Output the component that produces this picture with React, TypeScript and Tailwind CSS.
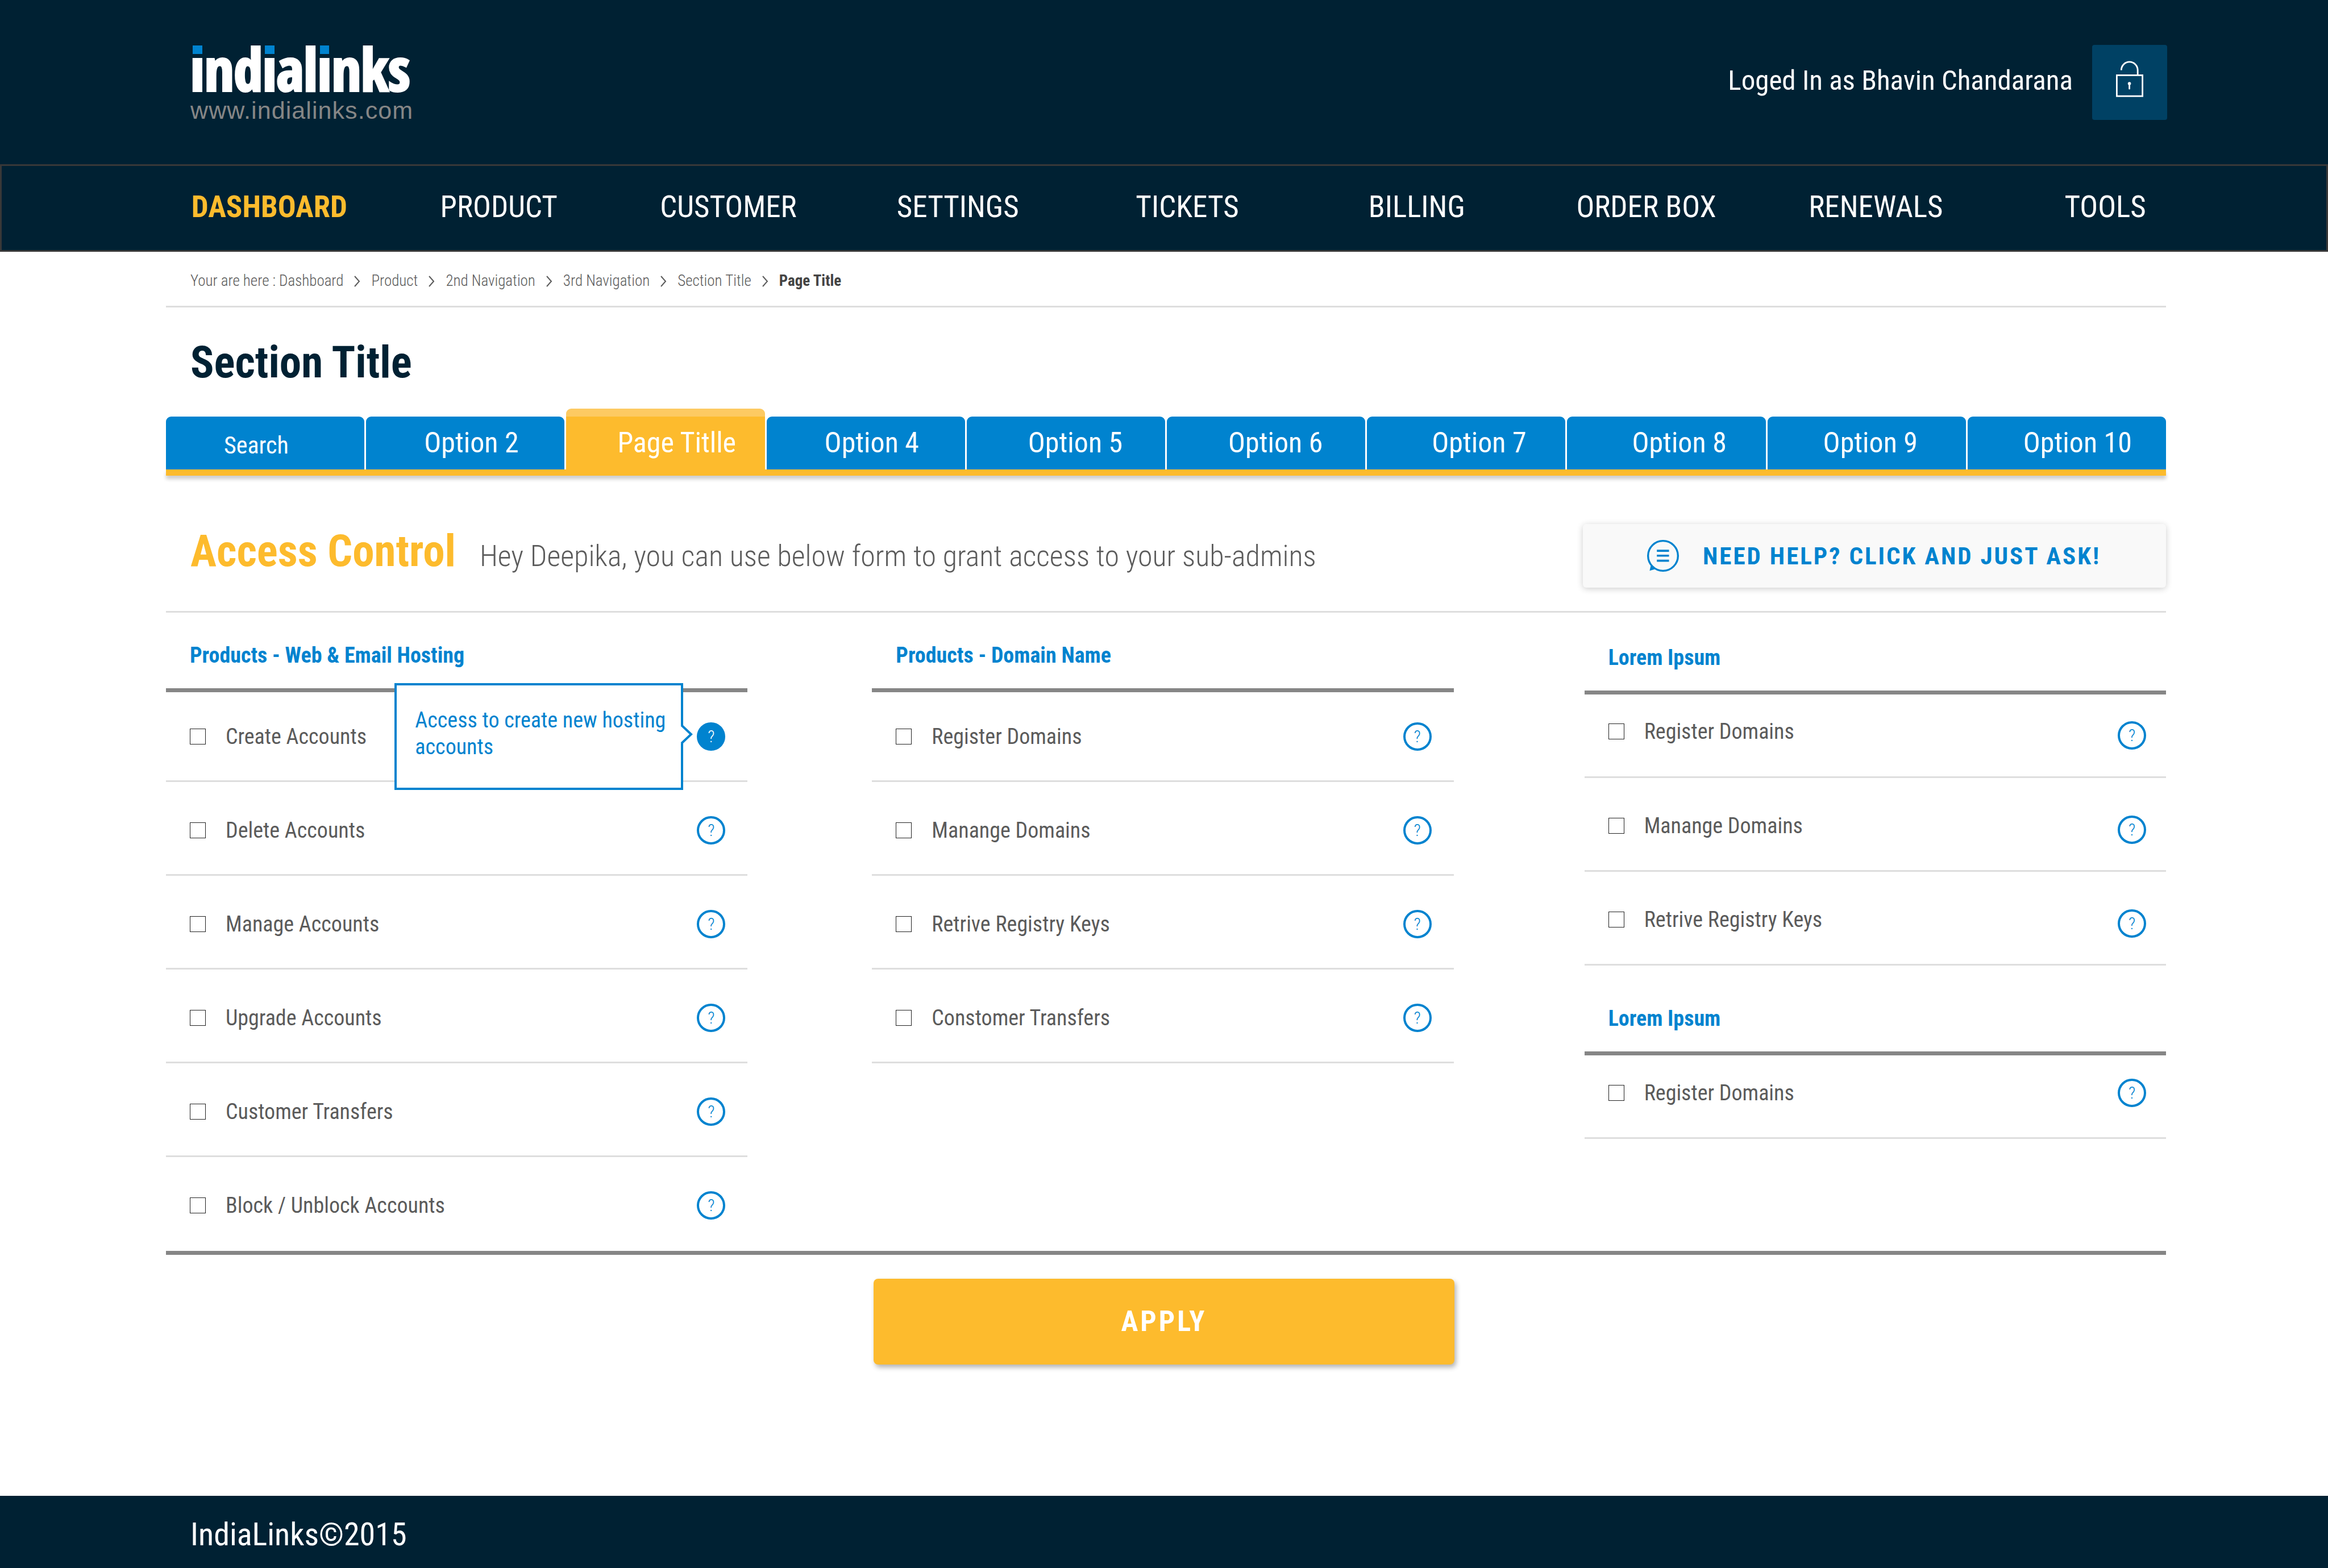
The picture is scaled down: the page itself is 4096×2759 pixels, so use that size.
import { Fragment } from "react";
import clsx from "clsx";

const NAV = ["DASHBOARD", "PRODUCT", "CUSTOMER", "SETTINGS", "TICKETS", "BILLING", "ORDER BOX", "RENEWALS", "TOOLS"];
const CRUMBS = ["Your are here : Dashboard", "Product", "2nd Navigation", "3rd Navigation", "Section Title"];

const TABS = [
  { label: "Search", pad: "pl-[102px] pt-2 text-[42px]" },
  { label: "Option 2", pad: "pl-[102px] text-[50px]" },
  { label: "Page Titlle", pad: "pl-[90px] text-[50px]", active: true },
  { label: "Option 4", pad: "pl-[102px] text-[50px]" },
  { label: "Option 5", pad: "pl-[108px] text-[50px]" },
  { label: "Option 6", pad: "pl-[108px] text-[50px]" },
  { label: "Option 7", pad: "pl-[114px] text-[50px]" },
  { label: "Option 8", pad: "pl-[114px] text-[50px]" },
  { label: "Option 9", pad: "pl-[98px] text-[50px]" },
  { label: "Option 10", pad: "pl-[98px] text-[50px]" },
];

function LogoI() {
  return (
    <span className="relative bg-[linear-gradient(transparent_49px,#fff_49px)] bg-clip-text text-transparent">
      i<span className="absolute top-[29px] right-[4px] left-[4px] h-[15px] bg-[#0083cf]" />
    </span>
  );
}

function Logo() {
  return (
    <a href="#home" className="block">
      <span className="block h-[98px] font-['Open_Sans_Condensed','Roboto_Condensed',sans-serif] text-[102px] leading-[84px] font-bold whitespace-nowrap text-white [-webkit-text-stroke:4px_#fff]">
        <span className="[&>span]:[-webkit-text-stroke:4px_transparent]">
          <LogoI />nd<LogoI />al<LogoI />nks
        </span>
      </span>
      <span className="block font-['Liberation_Sans',sans-serif] text-[43px] leading-[34px] tracking-wide text-[#868686]">
        www.indialinks.com
      </span>
    </a>
  );
}

function LockIcon() {
  return (
    <svg viewBox="0 0 171 227" className="h-[64px] w-[48px]" fill="none" stroke="#fff" strokeWidth="10">
      <path d="M33 58 A51.500 51.500 0 0 1 136 58 V88" />
      <rect x="5" y="90" width="161" height="131" />
      <circle cx="84" cy="142" r="10" fill="#fff" stroke="none" />
      <path d="M84 142 V174" strokeLinecap="round" />
    </svg>
  );
}

function ChatIcon() {
  return (
    <svg viewBox="0 0 202 202" className="size-[56px] shrink-0" fill="none" stroke="#0083cf">
      <circle cx="101" cy="101" r="95" strokeWidth="12" />
      <path d="M62 69 H139 M62 100 H139 M62 132 H139" strokeWidth="13" />
      <path d="M24 160 L16 196 L50 186 Z" fill="#0083cf" stroke="none" />
    </svg>
  );
}

function Chevron() {
  return (
    <svg viewBox="0 0 13 20" className="mx-[18px] h-[20px] w-[13px]" fill="none" stroke="#5b5b5b" strokeWidth="2">
      <path d="M2 1 L10 10 L2 19" />
    </svg>
  );
}

function Heading({ children, height }: { children: string; height: string }) {
  return (
    <h3
      className={clsx(
        "flex items-end border-b-[7px] border-[#868686] pb-[34px] pl-[42px] text-[38px] leading-[48px] font-bold text-[#0083cf]",
        height,
      )}
    >
      {children}
    </h3>
  );
}

function Row({ id, label, size, raised, tip, last }: {
  id: string;
  label: string;
  size: string;
  raised?: boolean;
  tip?: string;
  last?: boolean;
}) {
  return (
    <li className={clsx("flex items-center border-b-[3px] pl-[42px]", last ? "border-transparent" : "border-[#dedede]", size)}>
      <div className={clsx("flex items-center gap-[35px]", raised && "pb-[14px]")}>
        <input id={id} type="checkbox" className="size-[28px] appearance-none border border-[#222] bg-white checked:bg-[#0083cf]" />
        <label htmlFor={id} className="text-[38px] leading-[48px] text-[#5b5b5b]">{label}</label>
      </div>
      <div className="relative ml-auto">
        <button
          type="button"
          aria-label={`Help: ${label}`}
          className={clsx(
            "flex size-[50px] items-center justify-center rounded-full border-[4px] border-[#0083cf] text-[30px] leading-none font-light",
            tip ? "bg-[#0083cf] text-white" : "text-[#0083cf]",
          )}
        >
          ?
        </button>
        {tip && (
          <div role="tooltip" className="absolute -top-[69px] right-[74px] h-[188px] w-[508px] border-[4px] border-[#0083cf] bg-white pt-[38px] pl-[32px] text-[38px] leading-[47px] text-[#0083cf]">
            {tip}
            <svg viewBox="0 0 24 36" className="absolute top-[68px] -right-[22px] h-[36px] w-[24px]" fill="#fff" stroke="#0083cf" strokeWidth="4">
              <path d="M0 2 H2 L20 18 L2 34 H0" stroke="none" />
              <path d="M3 2 L20 18 L3 34" />
            </svg>
          </div>
        )}
      </div>
    </li>
  );
}

function Rows({ group, items, first = "h-[158px] pr-[39px]", next = "h-[165px] pt-[8px] pr-[39px]", raised, tips, openEnd }: {
  group: string;
  items: string[];
  first?: string;
  next?: string;
  raised?: boolean;
  tips?: Record<string, string>;
  openEnd?: boolean;
}) {
  return (
    <ul>
      {items.map((label, i) => (
        <Row
          key={label}
          id={`${group}-${i}`}
          label={label}
          raised={raised}
          tip={tips?.[label]}
          size={i === 0 ? first : next}
          last={openEnd && i === items.length - 1}
        />
      ))}
    </ul>
  );
}

export default function App() {
  return (
    <div className="flex min-h-screen flex-col bg-white font-['Roboto_Condensed','Roboto',sans-serif]">
      <header className="bg-[#002133] text-white">
        <div className="flex items-center justify-between pt-[79px] pr-[283px] pb-[78px] pl-[335px]">
          <Logo />
          <div className="flex items-center gap-[34px]">
            <span className="pb-[6px] text-[49px] leading-[60px]">Loged In as Bhavin Chandarana</span>
            <button type="button" aria-label="Log out" className="flex size-[132px] items-center justify-center rounded-[4px] bg-[#004164] pb-[12px]">
              <LockIcon />
            </button>
          </div>
        </div>
        <nav className="grid grid-cols-9 border-[3px] border-[#383838] pr-[187px] pl-[269px]">
          {NAV.map((item, i) => (
            <a
              key={item}
              href={`#${item.toLowerCase().replace(" ", "-")}`}
              className={clsx("pb-[4px] text-center text-[53px] leading-[144px] whitespace-nowrap", i === 0 && "font-bold text-[#fdbb2d]")}
            >
              {item}
            </a>
          ))}
        </nav>
      </header>

      <main className="pr-[285px] pl-[292px]">
        <nav aria-label="Breadcrumb" className="flex h-[98px] items-center border-b-[3px] border-[#dedede] pt-[8px] pl-[43px] text-[27px] font-light text-[#5b5b5b]">
          {CRUMBS.map((crumb) => (
            <Fragment key={crumb}>
              <a href="#crumb">{crumb}</a>
              <Chevron />
            </Fragment>
          ))}
          <span className="font-bold text-[#444]">Page Title</span>
        </nav>

        <h1 className="flex h-[178px] items-center pt-[16px] pl-[43px] text-[77px] leading-[90px] font-bold text-[#002133]">Section Title</h1>

        <div className="grid grid-cols-10 items-end gap-x-[3px] text-white">
          {TABS.map((tab) => (
            <button
              key={tab.label}
              type="button"
              className={clsx(
                "flex items-center rounded-t-[9px] whitespace-nowrap",
                tab.active
                  ? "h-[107px] bg-[linear-gradient(#fdca62_14px,#fdbb2d_14px)] pt-[14px]"
                  : "h-[93px] bg-[#0083cf]",
                tab.pad,
              )}
            >
              {tab.label}
            </button>
          ))}
        </div>
        <div className="h-[11px] bg-[#fdbb2d] shadow-[0_6px_6px_rgba(0,0,0,0.2)]" />

        <div className="flex items-center justify-between border-b-[3px] border-[#dedede] pt-[85px] pb-[41px] pl-[43px]">
          <div className="flex items-baseline gap-[42px] pb-[16px]">
            <h2 className="text-[77px] leading-[90px] font-bold text-[#fdbb2d]">Access Control</h2>
            <p className="text-[52px] leading-[64px] font-light text-[#5b5b5b]">
              Hey Deepika, you can use below form to grant access to your sub-admins
            </p>
          </div>
          <button type="button" className="flex h-[112px] w-[1026px] items-center gap-[42px] rounded-[6px] bg-[#f9f9f9] pl-[113px] text-[43px] font-bold tracking-[3px] whitespace-nowrap text-[#0083cf] shadow-[0_2px_12px_rgba(0,0,0,0.2)]">
            <ChatIcon />
            NEED HELP? CLICK AND JUST ASK!
          </button>
        </div>

        <form>
          <div className="flex items-start border-b-[7px] border-[#868686]">
            <section className="flex-1">
              <Heading height="h-[140px]">Products - Web &amp; Email Hosting</Heading>
              <Rows
                group="hosting"
                items={["Create Accounts", "Delete Accounts", "Manage Accounts", "Upgrade Accounts", "Customer Transfers", "Block / Unblock Accounts"]}
                tips={{ "Create Accounts": "Access to create new hosting accounts" }}
                openEnd
              />
            </section>
            <section className="ml-[219px] flex-1">
              <Heading height="h-[140px]">Products - Domain Name</Heading>
              <Rows group="domain" items={["Register Domains", "Manange Domains", "Retrive Registry Keys", "Constomer Transfers"]} />
            </section>
            <section className="ml-[230px] flex-1">
              <Heading height="h-[144px]">Lorem Ipsum</Heading>
              <Rows
                group="lorem-a"
                items={["Register Domains", "Manange Domains", "Retrive Registry Keys"]}
                first="h-[147px] pr-[35px]"
                next="h-[165px] pt-[19px] pr-[35px]"
                raised
              />
              <Heading height="h-[158px]">Lorem Ipsum</Heading>
              <Rows group="lorem-b" items={["Register Domains"]} first="h-[147px] pb-[12px] pr-[35px]" />
            </section>
          </div>
          <div className="flex justify-center pt-[42px] pr-[7px]">
            <button type="submit" className="h-[151px] w-[1022px] rounded-[8px] bg-[#fdbb2d] text-[50px] font-bold tracking-[4px] text-white shadow-[3px_5px_8px_rgba(0,0,0,0.3)]">
              APPLY
            </button>
          </div>
        </form>
      </main>

      <footer className="mt-auto flex h-[127px] items-center bg-[#002133] pt-[8px] pl-[335px] text-[56px] text-white">IndiaLinks©2015</footer>
    </div>
  );
}
